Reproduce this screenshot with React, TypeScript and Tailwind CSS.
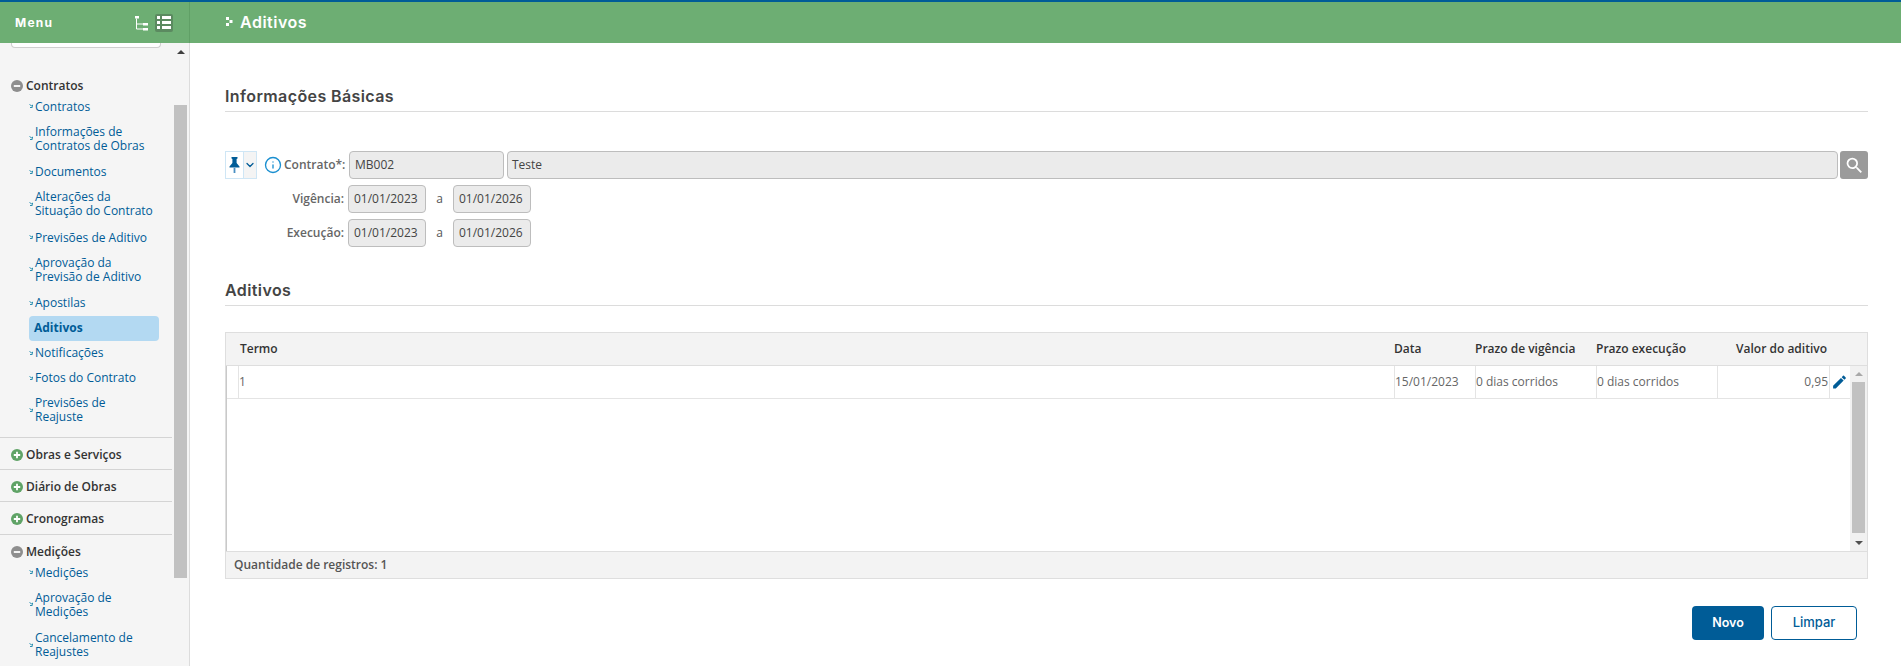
import { Info, ChevronDown } from "lucide-react";
import { MdEdit, MdSearch } from "react-icons/md";

const sans = "font-['Open_Sans',sans-serif]";
const head = "font-['Inter',sans-serif]";

const Arrow = () => (
  <svg width="5" height="5" viewBox="0 0 5 5" className="shrink-0 mr-px">
    <path d="M0.5 0.5 L3.5 2.5 L3.5 0.8 M3.5 3.5 H1" stroke="#2a8fb0" strokeWidth="1" fill="none" />
  </svg>
);

const Bullet = ({ open }: { open?: boolean }) => (
  <svg width="12" height="12" viewBox="0 0 12 12" className="shrink-0">
    <circle cx="6" cy="6" r="6" fill={open ? "#8e8e8e" : "#5fa366"} />
    <path d={open ? "M2.8 6H9.2" : "M2.8 6H9.2M6 2.8V9.2"} stroke="#fff" strokeWidth="1.8" />
  </svg>
);

const Item = ({ children, two }: { children: React.ReactNode; two?: boolean }) => (
  <li className={`flex items-center pl-[29px] text-[12px] leading-[14px] text-[#005c97] pt-[5.5px] ${two ? "pb-[7px]" : "pb-[5.5px]"}`}>
    <Arrow />
    <span>{children}</span>
  </li>
);

const Group = ({ label, open, children, line = true, className = "" }: { label: string; open?: boolean; children?: React.ReactNode; line?: boolean; className?: string }) => (
  <div className={`${line ? "border-b border-[#d4d4d4]" : ""} ${className}`}>
    <div className="flex items-center gap-[3px] pl-[11px] pt-[2px] h-[31px] text-[12px] font-semibold text-[#333]">
      <Bullet open={open} />
      <span>{label}</span>
    </div>
    {children}
  </div>
);

const Field = ({ children, className }: { children: React.ReactNode; className: string }) => (
  <div className={`h-[28px] flex items-center px-[5px] text-[12px] text-[#444] bg-[#ebebeb] border border-[#bdbdbd] rounded-[4px] ${className}`}>
    {children}
  </div>
);

const SectionTitle = ({ children, className }: { children: React.ReactNode; className: string }) => (
  <h2 className={`${head} text-[16px] font-semibold tracking-[0.4px] text-[#444] leading-[20px] pb-[5px] border-b border-[#dcdcdc] ${className}`}>
    {children}
  </h2>
);

const cols = "grid grid-cols-[12px_1156px_81px_121px_121px_112px]";

const Scrollbar = ({ className, thumb }: { className: string; thumb: string }) => (
  <div className={`flex flex-col items-center bg-[#f1f1f1] ${className}`}>
    <div className="h-[16px] w-full flex items-center justify-center">
      <div className="w-0 h-0 border-x-[4px] border-x-transparent border-b-[4px] border-b-[#a8a8a8]" />
    </div>
    <div className={`w-[13px] bg-[#c1c1c1] ${thumb}`} />
    <div className="mt-auto h-[16px] w-full flex items-center justify-center">
      <div className="w-0 h-0 border-x-[4px] border-x-transparent border-t-[4px] border-t-[#505050]" />
    </div>
  </div>
);

export default function App() {
  return (
    <div className={`${sans} h-[666px] w-[1901px] overflow-hidden bg-white flex flex-col`}>
      <header className="h-[43px] shrink-0 flex bg-[#6dae73] border-t-2 border-[#005c97] text-white">
        <div className="w-[190px] shrink-0 flex items-center pl-[15px] pr-[16px] border-r border-[#60a066]">
          <span className={`${head} text-[12px] font-bold tracking-[1.2px]`}>Menu</span>
          <svg width="16" height="16" viewBox="0 0 16 16" className="ml-auto mr-[5px]" fill="#fff">
            <rect x="1" y="1" width="4" height="2.5" />
            <rect x="9" y="8" width="5" height="2.5" />
            <rect x="9" y="13" width="5" height="2.5" />
            <path d="M2.5 3.5V14H9M2.5 9H9" stroke="#fff" fill="none" />
          </svg>
          <div className="w-[18px] h-[18px] rounded-[2px] bg-[#5b8a60] flex flex-col justify-center gap-[2px] px-[2px]">
            {[0, 1, 2].map((i) => (
              <div key={i} className="flex gap-[2px]">
                <div className="w-[3px] h-[3px] bg-white" />
                <div className="w-[9px] h-[3px] bg-white" />
              </div>
            ))}
          </div>
        </div>
        <div className="flex items-center pl-[36px] gap-[7px] pb-[2px]">
          <svg width="7" height="9" viewBox="0 0 7 9" fill="#fff">
            <rect x="0" y="0" width="3" height="3" />
            <rect x="3.5" y="3" width="3" height="3" />
            <rect x="0" y="6" width="3" height="3" />
          </svg>
          <h1 className={`${head} text-[16px] font-semibold tracking-[0.5px]`}>Aditivos</h1>
        </div>
      </header>

      <div className="flex flex-1 min-h-0">
        <aside className="w-[190px] shrink-0 flex bg-[#f5f5f5] border-r border-[#dcdcdc] overflow-hidden">
          <nav className="w-[172px] shrink-0">
            <div className="mx-[11px] h-[5px] bg-white border border-t-0 border-[#cfcfcf] rounded-b-[4px]" />
            <div className="h-[21px]" />
            <Group label="Contratos" open>
              <ul className="pb-[6px] -mt-[6px]">
                <Item>Contratos</Item>
                <Item two>Informações de<br />Contratos de Obras</Item>
                <Item>Documentos</Item>
                <Item two>Alterações da<br />Situação do Contrato</Item>
                <Item>Previsões de Aditivo</Item>
                <Item two>Aprovação da<br />Previsão de Aditivo</Item>
                <Item>Apostilas</Item>
                <li className="ml-[29px] mr-[13px] h-[25px] flex items-center pl-[5px] rounded-[4px] bg-[#b3d9f2] text-[12px] font-bold text-[#005c97]">Aditivos</li>
                <Item>Notificações</Item>
                <Item>Fotos do Contrato</Item>
                <Item two>Previsões de<br />Reajuste</Item>
              </ul>
            </Group>
            <Group label="Obras e Serviços" />
            <Group label="Diário de Obras" />
            <Group label="Cronogramas" className="pb-[1px]" />
            <Group label="Medições" open line={false}>
              <ul className="-mt-[6px]">
                <Item>Medições</Item>
                <Item two>Aprovação de<br />Medições</Item>
                <Item two>Cancelamento de<br />Reajustes</Item>
              </ul>
            </Group>
          </nav>
          <div className="w-[17px] relative">
            <div className="h-[16px] mt-[1px] flex items-center justify-center">
              <div className="w-0 h-0 border-x-[4px] border-x-transparent border-b-[4px] border-b-[#404040]" />
            </div>
            <div className="mt-[45px] ml-[2px] w-[13px] h-[473px] bg-[#c1c1c1]" />
          </div>
        </aside>

        <main className="flex-1 pl-[35px] pr-[33px] pt-[43px]">
          <SectionTitle className="mb-[39px]">Informações Básicas</SectionTitle>

          <div className="flex items-center gap-[3px]">
            <div className="flex h-[28px] w-[32px] border border-[#cfe6f5] mr-[5px]">
              <div className="w-[21px] flex items-center justify-center border-r border-[#cfe6f5]">
                <svg width="11" height="16" viewBox="0 0 11 16" fill="#005c97">
                  <path d="M2.5 0H8.5V1.5L7.6 2V6L10.5 9.5V10.5H0.5V9.5L3.4 6V2L2.5 1.5Z" />
                  <rect x="4.6" y="11" width="1.8" height="5" fill="#4a90c2" />
                </svg>
              </div>
              <div className="flex-1 flex items-center justify-center bg-[#f4f4f4]">
                <ChevronDown size={12} strokeWidth={2.5} color="#005c97" />
              </div>
            </div>
            <Info size={18} strokeWidth={1.8} color="#1a8fd0" className="-mx-[1px]" />
            <label className="text-[12px] font-semibold text-[#666] w-[62px]">Contrato*:</label>
            <Field className="w-[155px]">MB002</Field>
            <Field className="flex-1 pl-[4px]">Teste</Field>
            <div className="w-[28px] h-[28px] -ml-[1px] rounded-[3px] bg-[#9b9b9b] flex items-center justify-center">
              <MdSearch size={21} color="#fff" />
            </div>
          </div>

          <div className="mt-[6px] flex items-center">
            <label className="w-[121px] pr-[2px] text-right text-[12px] font-semibold text-[#666]">Vigência:</label>
            <Field className="w-[78px] ml-[2px]">01/01/2023</Field>
            <span className="w-[27px] text-center text-[12px] text-[#555]">a</span>
            <Field className="w-[78px]">01/01/2026</Field>
          </div>
          <div className="mt-[6px] flex items-center">
            <label className="w-[121px] pr-[2px] text-right text-[12px] font-semibold text-[#666]">Execução:</label>
            <Field className="w-[78px] ml-[2px]">01/01/2023</Field>
            <span className="w-[27px] text-center text-[12px] text-[#555]">a</span>
            <Field className="w-[78px]">01/01/2026</Field>
          </div>

          <SectionTitle className="mt-[33px]">Aditivos</SectionTitle>

          <div className="mt-[26px] h-[247px] border border-[#dedede] flex flex-col">
            <div className={`${cols} h-[33px] items-center bg-[#f3f3f3] border-b border-[#dedede] text-[12px] font-semibold text-[#333]`}>
              <div />
              <div className="pl-[2px]">Termo</div>
              <div>Data</div>
              <div>Prazo de vigência</div>
              <div>Prazo execução</div>
              <div className="text-right pr-[2px]">Valor do aditivo</div>
            </div>
            <div className="flex flex-1 min-h-0 border-l border-[#c9c9c9]">
              <div className="flex-1">
                <div className="flex h-[33px] border-b border-[#e4e4e4] text-[12px] text-[#666]">
                  <div className={`${cols} flex-1 [&>div]:border-r [&>div]:border-[#e4e4e4] [&>div]:flex [&>div]:items-center`}>
                    <div />
                    <div>1</div>
                    <div>15/01/2023</div>
                    <div>0 dias corridos</div>
                    <div>0 dias corridos</div>
                    <div className="justify-end pr-[1px]">0,95</div>
                  </div>
                  <div className="w-[19px] flex items-center justify-center pr-[2px]">
                    <MdEdit size={18} color="#005c97" />
                  </div>
                </div>
              </div>
              <Scrollbar className="w-[17px]" thumb="h-[151px]" />
            </div>
            <div className="h-[27px] flex items-center pl-[8px] bg-[#f3f3f3] border-t border-[#dedede] text-[12px] font-semibold text-[#555]">
              Quantidade de registros: 1
            </div>
          </div>

          <div className="mt-[27px] flex justify-end gap-[7px] pr-[11px]">
            <button className={`${head} w-[72px] h-[34px] rounded-[4px] bg-[#005c97] text-white text-[12.5px] font-semibold`}>Novo</button>
            <button className={`${head} w-[86px] h-[34px] rounded-[4px] border border-[#005c97] bg-white text-[#005c97] text-[13px] font-medium`}>Limpar</button>
          </div>
        </main>
      </div>
    </div>
  );
}
